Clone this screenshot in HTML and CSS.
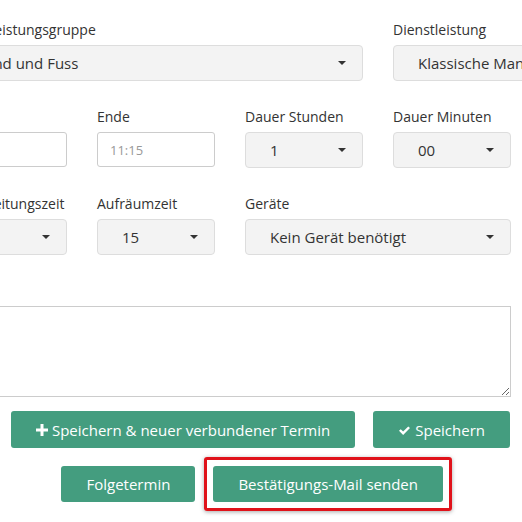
FILE: index.html
```html
<!DOCTYPE html>
<html lang="de">
<head>
  <meta charset="UTF-8">
  <meta name="viewport" content="width=device-width, initial-scale=1.0">
  <title>Termin bearbeiten</title>
  <link rel="stylesheet" href="styles.css">
</head>
<body>
  <form class="termin-form">
    <!-- Leistung -->
    <div class="row row-top">
      <div class="field">
        <label>Dienstleistungsgruppe</label>
        <div class="select"><span>Hand und Fuss</span><i class="caret"></i></div>
      </div>
      <div class="field">
        <label>Dienstleistung</label>
        <div class="select"><span>Klassische Maniküre</span><i class="caret"></i></div>
      </div>
    </div>

    <!-- Zeit -->
    <div class="row">
      <div class="field">
        <label>Beginn</label>
        <input type="text" class="text-input" value="10:15">
      </div>
      <div class="field">
        <label>Ende</label>
        <input type="text" class="text-input" placeholder="11:15" disabled>
      </div>
      <div class="field">
        <label>Dauer Stunden</label>
        <div class="select"><span>1</span><i class="caret"></i></div>
      </div>
      <div class="field">
        <label>Dauer Minuten</label>
        <div class="select"><span>00</span><i class="caret"></i></div>
      </div>
    </div>

    <div class="row">
      <div class="field">
        <label>Vorbereitungszeit</label>
        <div class="select"><span>15</span><i class="caret"></i></div>
      </div>
      <div class="field">
        <label>Aufräumzeit</label>
        <div class="select"><span>15</span><i class="caret"></i></div>
      </div>
      <div class="field span-2">
        <label>Geräte</label>
        <div class="select"><span>Kein Gerät benötigt</span><i class="caret"></i></div>
      </div>
    </div>

    <textarea class="notes"></textarea>

    <div class="actions">
      <button type="button" class="btn">
        <svg class="icon" viewBox="0 0 12 12" width="12" height="12"><path d="M4.5 0h3v4.5H12v3H7.5V12h-3V7.5H0v-3h4.5z" fill="#fff"/></svg>
        Speichern &amp; neuer verbundener Termin
      </button>
      <button type="button" class="btn">
        <svg class="icon" viewBox="0 0 14 12" width="13" height="11"><path d="M1 6.4l1.9-1.9 2.6 2.6L11.1 1.5 13 3.4 5.5 10.9z" fill="#fff"/></svg>
        Speichern
      </button>
    </div>

    <div class="actions actions-second">
      <button type="button" class="btn">Folgetermin</button>
      <div class="highlight">
        <button type="button" class="btn">Bestätigungs-Mail senden</button>
      </div>
    </div>
  </form>
</body>
</html>
```

FILE: styles.css
```css
* {
  margin: 0;
  padding: 0;
  box-sizing: border-box;
  font-family: 'Open Sans', 'Noto Sans', sans-serif;
}

body {
  background-color: #ffffff;
  color: #333333;
  overflow: hidden;
  width: 522px;
  height: 522px;
}

.termin-form {
  width: 562px;
  margin-left: -51px;
  padding-top: 20px;
}

.row {
  display: grid;
  grid-template-columns: repeat(4, 118px);
  column-gap: 30px;
  margin-bottom: 26px;
}

.row-top {
  grid-template-columns: 414px 200px;
}

.span-2 {
  grid-column: span 2;
}

.field label {
  display: block;
  font-size: 14px;
  line-height: 20px;
  margin-bottom: 5px;
  color: #333333;
  white-space: nowrap;
}

.select {
  height: 36px;
  background-color: #f3f3f3;
  border: 1px solid #dddddd;
  border-radius: 4px;
  padding: 0 16px 0 24px;
  display: flex;
  align-items: center;
  justify-content: space-between;
  font-size: 15px;
  color: #333333;
  white-space: nowrap;
}

.caret {
  width: 0;
  height: 0;
  border-left: 4px solid transparent;
  border-right: 4px solid transparent;
  border-top: 4px solid #333333;
  flex-shrink: 0;
}

.text-input {
  width: 100%;
  height: 35px;
  border: 1px solid #cccccc;
  border-radius: 3px;
  background-color: #ffffff;
  padding: 0 12px;
  font-size: 13px;
  color: #555555;
  outline: none;
}

.text-input::placeholder {
  color: #999999;
}

.notes {
  display: block;
  width: 562px;
  height: 91px;
  margin-top: 51px;
  border: 1px solid #cccccc;
  background-color: #ffffff;
  resize: vertical;
  outline: none;
}

.actions {
  display: flex;
  justify-content: flex-end;
  gap: 18px;
  margin-top: 14px;
  padding-right: 1px;
}

.actions-second {
  margin-top: 18px;
  padding-right: 68px;
}

.btn {
  height: 37px;
  padding: 0 25px;
  background-color: #449d7f;
  color: #ffffff;
  border: none;
  border-radius: 3px;
  font-size: 15px;
  display: flex;
  align-items: center;
  gap: 4px;
  cursor: pointer;
}

.actions-second .btn {
  height: 36px;
}

.icon {
  display: block;
  margin-top: 1px;
}

/* Markierung um den Mail-Button */
.highlight {
  position: relative;
}

.highlight::after {
  content: "";
  position: absolute;
  top: -9px;
  left: -9px;
  right: -9px;
  bottom: -9px;
  border: 3px solid #e0121a;
  border-radius: 3px;
  box-shadow: 0 1px 4px rgba(0, 0, 0, 0.35);
  pointer-events: none;
}
```
